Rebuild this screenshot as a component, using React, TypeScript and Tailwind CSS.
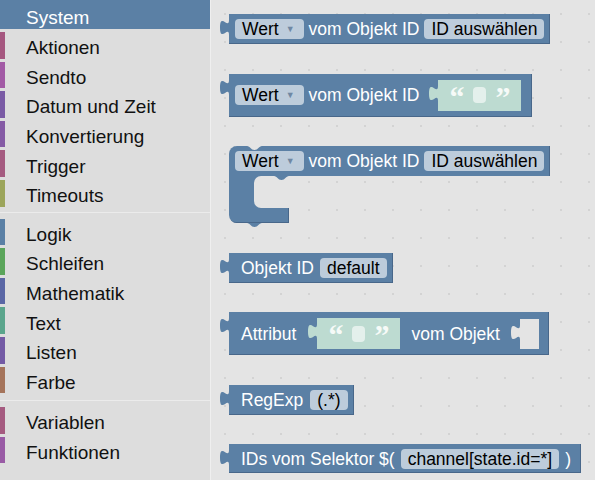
import type { ReactNode } from 'react';

const font = { fontFamily: '"Liberation Sans", Arial, sans-serif' };
const serif = { fontFamily: '"Liberation Serif", "Times New Roman", serif' };

const cats: [string, string][] = [
  ['Aktionen', '#a5577f'],
  ['Sendto', '#a25aa5'],
  ['Datum und Zeit', '#7a5ba5'],
  ['Konvertierung', '#855ba5'],
  ['Trigger', '#a55b80'],
  ['Timeouts', '#9ca55b'],
];
const cats2: [string, string][] = [
  ['Logik', '#5b80a5'],
  ['Schleifen', '#5ba55b'],
  ['Mathematik', '#5b67a5'],
  ['Text', '#5ba58c'],
  ['Listen', '#745ba5'],
  ['Farbe', '#a5745b'],
];
const cats3: [string, string][] = [
  ['Variablen', '#a55b80'],
  ['Funktionen', '#995ba5'],
];

function Row({ name, color }: { name: string; color: string }) {
  return (
    <div className="flex h-[26.6px] items-center">
      <div className="h-full w-[5px]" style={{ backgroundColor: color }} />
      <span className="ml-[21px] mt-[6px] text-[19px] leading-[22px] text-[#111]">{name}</span>
    </div>
  );
}

function Tab({ fill, className = '' }: { fill: string; className?: string }) {
  return (
    <svg width="9" height="15" viewBox="0 0 9 15" className={className}>
      <path d="M9,0 C9,10 0,-8 0,7.5 S9,5 9,15 Z" fill={fill} />
    </svg>
  );
}

function Notch({ fill, className = '' }: { fill: string; className?: string }) {
  return (
    <svg width="15" height="4" viewBox="0 0 15 4" className={className}>
      <path d="M0,0 C3,0 4,4 7.5,4 C11,4 12,0 15,0 Z" fill={fill} />
    </svg>
  );
}

function Field({ children, className = '' }: { children: ReactNode; className?: string }) {
  return (
    <span className={`flex h-[20px] items-center whitespace-nowrap rounded-[4px] bg-[#bdccdb] px-[7px] text-[17.5px] leading-[20px] text-black ${className}`}>
      {children}
    </span>
  );
}

function Dropdown() {
  return (
    <Field className="pr-[9px]">
      Wert
      <span className="ml-[7px] text-[9px] leading-[10px] text-[#6f88a3]">▼</span>
    </Field>
  );
}

function Block({ children, className = '' }: { children: ReactNode; className?: string }) {
  return (
    <div className={`relative ml-[18px] flex items-center self-start whitespace-nowrap bg-[#5b80a5] text-[17.5px] leading-[20px] text-white shadow-[inset_-1px_-1px_0_#48678a] ${className}`}>
      <Tab fill="#5b80a5" className="absolute -left-[9px] top-[6px]" />
      {children}
    </div>
  );
}

function TextShadow({ className = '' }: { className?: string }) {
  return (
    <div className={`relative flex h-[31px] w-[83px] items-center justify-center bg-[#bddbd1] ${className}`}>
      <Tab fill="#bddbd1" className="absolute -left-[9px] top-[6px]" />
      <span className="mt-[3px] text-[30px] font-bold leading-[30px] text-[#f6faf8]" style={serif}>“</span>
      <span className="mx-[9px] h-[16px] w-[13px] rounded-[4px] bg-[#e4f0ec]" />
      <span className="mt-[3px] text-[30px] font-bold leading-[30px] text-[#f6faf8]" style={serif}>”</span>
    </div>
  );
}

export default function App() {
  return (
    <div className="flex h-[480px] w-[595px] overflow-hidden" style={font}>
      <div className="flex w-[210px] shrink-0 flex-col gap-[3px] bg-[#dddddd]">
        <div className="flex h-[29px] items-center bg-[#5b80a5]">
          <span className="ml-[26px] mt-[6px] text-[19px] leading-[22px] text-white">System</span>
        </div>
        {cats.map(([n, c]) => (
          <Row key={n} name={n} color={c} />
        ))}
        <div className="flex h-[6px] items-center">
          <div className="h-px w-full bg-[#ebebeb]" />
        </div>
        {cats2.map(([n, c]) => (
          <Row key={n} name={n} color={c} />
        ))}
        <div className="flex h-[8px] items-center">
          <div className="h-px w-full bg-[#ebebeb]" />
        </div>
        {cats3.map(([n, c]) => (
          <Row key={n} name={n} color={c} />
        ))}
      </div>

      <div className="flex flex-1 flex-col gap-[29.5px] border-l border-[#efefef] bg-[#e4e4e4] bg-[radial-gradient(circle,#d3d3d3_1px,transparent_1.5px)] bg-[length:28px_28px] pt-[14px]">
        {/* Wert vom Objekt ID */}
        <Block className="h-[30px] pl-[6px] pr-[6px]">
          <Dropdown />
          <span className="ml-[5px]">vom Objekt ID</span>
          <Field className="ml-[5px]">ID auswählen</Field>
        </Block>

        <Block className="h-[43px] pl-[6px] pr-[11px]">
          <Dropdown />
          <span className="ml-[5px]">vom Objekt ID</span>
          <TextShadow className="ml-[19px]" />
        </Block>

        {/* statement block with C input */}
        <div className="relative ml-[18px] flex flex-col self-start whitespace-nowrap text-[17.5px] leading-[20px] text-white">
          <div className="relative flex h-[30px] items-center rounded-tl-[8px] bg-[#5b80a5] pl-[6px] pr-[6px] shadow-[inset_-1px_0_0_#48678a]">
            <Notch fill="#e4e4e4" className="absolute left-[18px] top-0" />
            <Dropdown />
            <span className="ml-[5px]">vom Objekt ID</span>
            <Field className="ml-[5px]">ID auswählen</Field>
            <Notch fill="#5b80a5" className="absolute left-[45px] top-[30px]" />
          </div>
          <div className="flex h-[32px]">
            <div className="w-[25px] bg-[#5b80a5]" />
            <div className="w-[35px] bg-[#5b80a5]">
              <div className="h-full w-full rounded-l-[7px] bg-[#e4e4e4]" />
            </div>
          </div>
          <div className="relative h-[15px] w-[60px] rounded-bl-[8px] bg-[#5b80a5] shadow-[inset_-1px_-1px_0_#48678a]">
            <Notch fill="#5b80a5" className="absolute left-[18px] top-[15px]" />
          </div>
        </div>

        <Block className="h-[30px] pl-[12px] pr-[6px]">
          <span>Objekt ID</span>
          <Field className="ml-[6px]">default</Field>
        </Block>

        <Block className="h-[43px] pl-[12px] pr-[10px]">
          <span>Attribut</span>
          <TextShadow className="ml-[21px]" />
          <span className="ml-[11px]">vom Objekt</span>
          <div className="relative ml-[20px] h-[30px] w-[19px] bg-[#e4e4e4]">
            <Tab fill="#e4e4e4" className="absolute -left-[9px] top-[6px]" />
          </div>
        </Block>

        <Block className="h-[30px] pl-[12px] pr-[6px]">
          <span>RegExp</span>
          <Field className="ml-[7px] px-[6px]">(.*)</Field>
        </Block>

        <Block className="h-[29px] pl-[12px] pr-[10px]">
          <span>IDs vom Selektor $(</span>
          <Field className="ml-[6px]">channel[state.id=*]</Field>
          <span className="ml-[6px]">)</span>
        </Block>
      </div>
    </div>
  );
}
